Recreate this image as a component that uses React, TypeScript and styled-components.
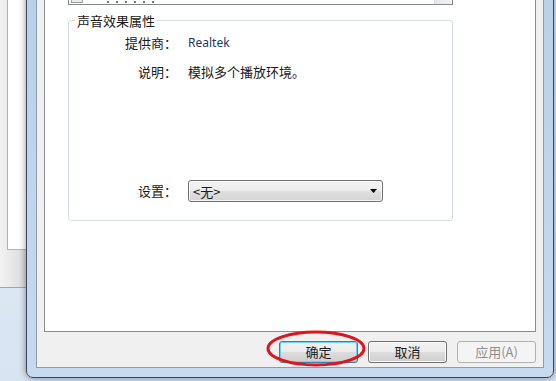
import styled, { createGlobalStyle } from "styled-components";

const GlobalStyle = createGlobalStyle`
  html, body {
    margin: 0;
    padding: 0;
  }
  body {
    width: 556px;
    height: 381px;
    overflow: hidden;
    font-family: "Noto Sans CJK SC", "Noto Sans", sans-serif;
  }
`;

const Desktop = styled.div`
  position: relative;
  width: 556px;
  height: 381px;
  overflow: hidden;
  background: linear-gradient(to bottom, #e8eff8, #d8e4f2);
`;

// window behind the dialog, only its right edge shows
const BackWindow = styled.div`
  position: absolute;
  left: 0;
  top: 0;
  width: 28px;
  height: 288px;
  box-sizing: border-box;
  padding-left: 7px;
  background: linear-gradient(to right, #f2f2f2, #d9d9d9);
  border-bottom: 1px solid #a3a3a3;
`;

const BackPane = styled.div`
  height: 249px;
  background: #fff;
  border-left: 1px solid #b3b3b3;
  border-bottom: 1px solid #b3b3b3;
`;

const Dialog = styled.div`
  position: absolute;
  left: 26px;
  top: -60px;
  width: 528px;
  height: 438px;
  box-sizing: border-box;
  display: flex;
  padding: 9px;
  border: 1px solid #3b4757;
  border-radius: 0 0 7px 7px;
  background: linear-gradient(to bottom, #b7cfe9, #c6daf0);
  box-shadow: 0 0 7px rgba(0, 0, 0, 0.45);
`;

const Client = styled.div`
  flex: 1;
  display: flex;
  flex-direction: column;
  padding: 7px 7px 0;
  background: #f0f0f0;
  border: 1px solid #8e9bab;
`;

const TabPage = styled.div`
  flex: 1;
  display: flex;
  flex-direction: column;
  align-items: flex-start;
  padding: 11px 0 0 23px;
  background: #fff;
  border: 1px solid #898c95;
`;

const ListBox = styled.div`
  width: 385px;
  height: 35px;
  box-sizing: border-box;
  display: flex;
  border: 1px solid #828790;
  background: #fff;
  overflow: hidden;
`;

const ListItems = styled.div`
  flex: 1;
  display: flex;
  align-items: flex-end;
  gap: 24px;
  padding: 0 0 1px 2px;
`;

// lower edge of the item icon, the rest is scrolled out of view
const ItemIcon = styled.span`
  width: 12px;
  height: 3px;
  box-sizing: border-box;
  border: 1px solid #9a9a9a;
  border-top: none;
  background: #e9e9e9;
`;

// feet of the item caption glyphs peeking out at the bottom
const ItemTail = styled.span`
  width: 48px;
  height: 2px;
  background-image: repeating-linear-gradient(
    to right,
    #7a7a7a 0 2px,
    transparent 2px 9px
  );
`;

const ScrollTrack = styled.div`
  width: 17px;
  background: linear-gradient(to right, #e8e8e8, #f4f4f4);
  border-left: 1px solid #e2e2e2;
`;

const Group = styled.fieldset`
  width: 385px;
  min-width: 0;
  box-sizing: border-box;
  margin: 8px 0 0;
  padding: 6px 0 18px;
  border: 1px solid #d5dfe5;
  border-radius: 3px;
`;

const GroupTitle = styled.legend`
  margin-left: 6px;
  padding: 0 2px;
  font-size: 13px;
  line-height: 15px;
  color: #1a1a1a;
`;

const Props = styled.div`
  display: grid;
  grid-template-columns: 108px 1fr;
  grid-template-rows: 18px 106px 22px;
  column-gap: 11px;
  row-gap: 11px;
`;

const Label = styled.div<{ $center?: boolean }>`
  text-align: right;
  font-size: 13px;
  line-height: 18px;
  color: #1a1a1a;
  align-self: ${(p) => (p.$center ? "center" : "start")};
`;

const Value = styled.div<{ $latin?: boolean }>`
  font-family: ${(p) =>
    p.$latin ? '"Noto Sans", "Liberation Sans", sans-serif' : '"Noto Sans CJK SC", sans-serif'};
  font-size: ${(p) => (p.$latin ? "12px" : "13px")};
  line-height: 18px;
  color: ${(p) => (p.$latin ? "#1e395b" : "#1a1a1a")};
`;

const Combo = styled.div`
  width: 195px;
  height: 22px;
  box-sizing: border-box;
  display: flex;
  align-items: center;
  justify-content: space-between;
  padding: 0 5px 0 4px;
  border: 1px solid #707070;
  border-radius: 3px;
  background: linear-gradient(#f4f4f4 0%, #ececec 50%, #e0e0e0 50%, #d4d4d4 100%);
  box-shadow: inset 0 0 0 1px rgba(255, 255, 255, 0.75);
  font-size: 13px;
  color: #1a1a1a;
`;

const ButtonRow = styled.div`
  display: flex;
  justify-content: flex-end;
  gap: 10px;
  padding: 9px 0 4px;
`;

const Button = styled.button<{ $default?: boolean }>`
  width: 79px;
  height: 22px;
  padding: 0;
  font-family: "Noto Sans CJK SC", sans-serif;
  font-size: 13px;
  line-height: 18px;
  color: #1a1a1a;
  border: 1px solid ${(p) => (p.$default ? "#3c7fb1" : "#707070")};
  border-radius: 3px;
  background: linear-gradient(#f2f2f2 0%, #ebebeb 50%, #dddddd 50%, #cfcfcf 100%);
  box-shadow: inset 0 0 0 1px ${(p) => (p.$default ? "#6fd0f6" : "#fbfbfb")};

  &:disabled {
    color: #8f8f8f;
    border-color: #adb2b5;
    background: #f4f4f4;
    box-shadow: none;
  }
`;

const Mark = styled.svg`
  position: absolute;
  left: 265px;
  top: 329px;
  pointer-events: none;
`;

export default function App() {
  return (
    <Desktop>
      <GlobalStyle />
      <BackWindow>
        <BackPane />
      </BackWindow>
      <Dialog>
        <Client>
          <TabPage>
            <ListBox>
              <ListItems>
                <ItemIcon />
                <ItemTail />
              </ListItems>
              <ScrollTrack />
            </ListBox>
            <Group>
              <GroupTitle>声音效果属性</GroupTitle>
              <Props>
                <Label>提供商：</Label>
                <Value $latin>Realtek</Value>
                <Label>说明：</Label>
                <Value>模拟多个播放环境。</Value>
                <Label $center>设置：</Label>
                <Combo>
                  <span>&lt;无&gt;</span>
                  <svg width="7" height="4" viewBox="0 0 7 4">
                    <polygon points="0,0 7,0 3.5,4" fill="#000" />
                  </svg>
                </Combo>
              </Props>
            </Group>
          </TabPage>
          <ButtonRow>
            <Button $default>确定</Button>
            <Button>取消</Button>
            <Button disabled>应用(A)</Button>
          </ButtonRow>
        </Client>
      </Dialog>
      <Mark width="104" height="40" viewBox="0 0 104 40">
        <ellipse cx="51" cy="19.5" rx="48" ry="16.5" fill="none" stroke="#e0141c" strokeWidth="3" />
      </Mark>
    </Desktop>
  );
}
